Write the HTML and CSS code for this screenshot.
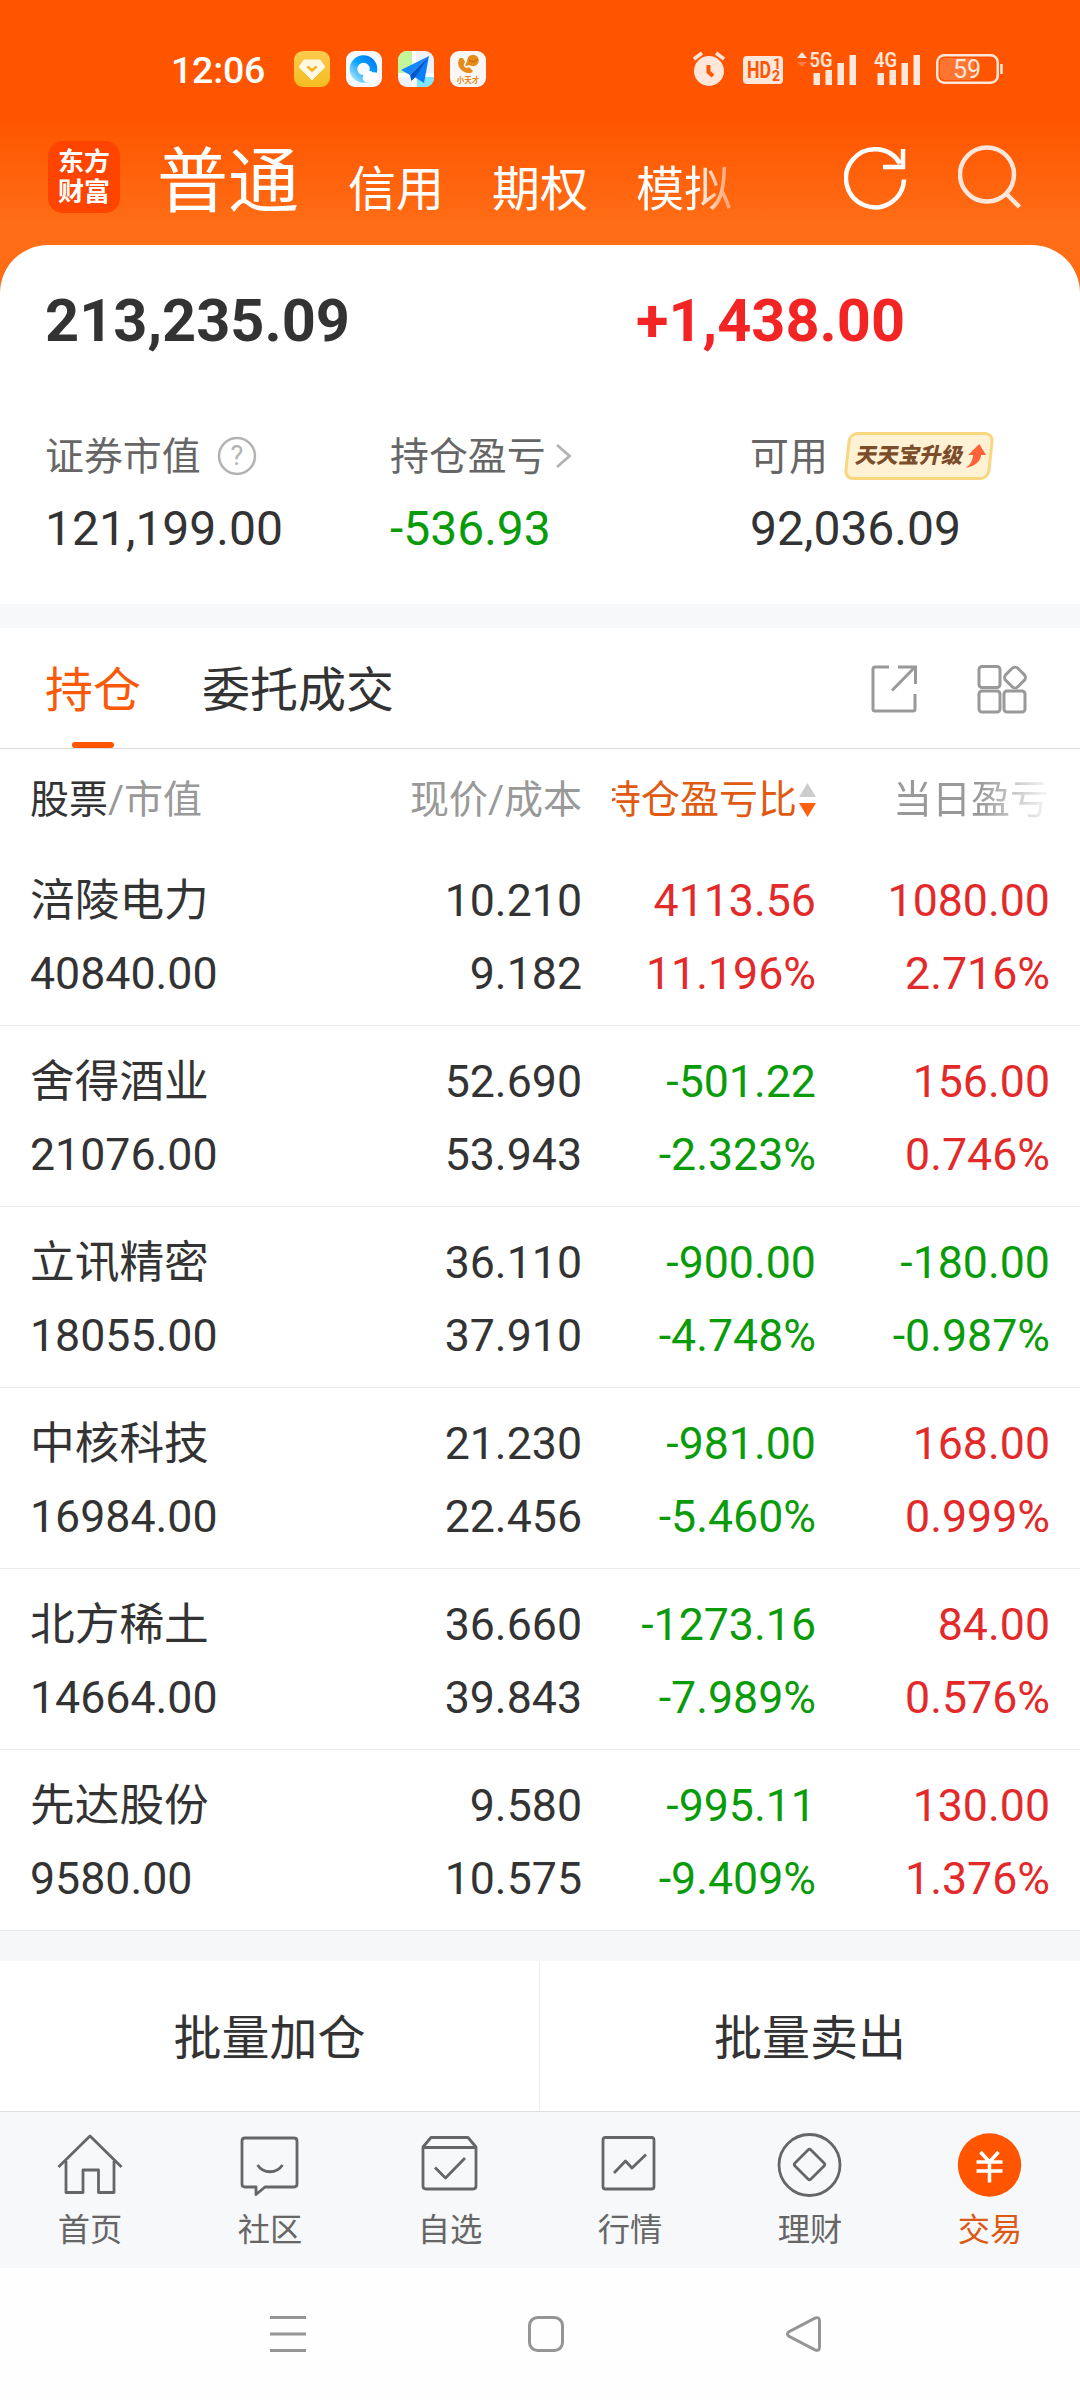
FILE: index.html
```html
<!DOCTYPE html>
<html lang="zh-CN">

<head>
    <meta charset="UTF-8">
    <meta name="viewport" content="width=device-width, initial-scale=1.0">
    <title>交易</title>
    <link rel="stylesheet" href="styles.css">
</head>

<body>

    <header class="header">
        <div class="status">
            <span class="time">12:06</span>
            <div class="apps">
                <svg width="36" height="36" viewBox="0 0 36 36">
                    <defs>
                        <linearGradient id="gold" x1="0" y1="0" x2="0" y2="1">
                            <stop offset="0" stop-color="#fbcb4e" />
                            <stop offset="1" stop-color="#f4bd20" />
                        </linearGradient>
                    </defs>
                    <rect width="36" height="36" rx="9" fill="url(#gold)" />
                    <path d="M10 9h16l5 7-13 13L5 16z" fill="#fff8e2" stroke="#fff8e2" stroke-linejoin="round" />
                    <path d="M13.500 15.500l4.500 4 4.500-4" fill="none" stroke="#f2b51d" stroke-width="2.800" />
                </svg>
                <svg width="36" height="36" viewBox="0 0 36 36">
                    <defs>
                        <linearGradient id="ring" x1="1" y1="0" x2="0" y2="1">
                            <stop offset="0" stop-color="#007cf6" />
                            <stop offset=".5" stop-color="#0aa5fb" />
                            <stop offset="1" stop-color="#9fe0ff" />
                        </linearGradient>
                    </defs>
                    <rect width="36" height="36" rx="9" fill="#f5f8fc" />
                    <circle cx="17.500" cy="18" r="10" fill="none" stroke="url(#ring)" stroke-width="7.500" />
                    <path d="M19 31a4.500 4.500 0 0 1 0-8 5 5 0 0 1 8-1.500 5 5 0 0 1 3 9.500z" fill="#fff" />
                </svg>
                <svg width="36" height="36" viewBox="0 0 36 36">
                    <rect width="36" height="36" rx="9" fill="#eef2f6" />
                    <path d="M9 0h5v22H0V9a9 9 0 0 1 9-9z" fill="#c3f59a" />
                    <path d="M19 26h17v1a9 9 0 0 1-9 9h-8z" fill="#7fe6ff" />
                    <path d="M14 0h4v36h-4zM0 22h36v4H0z" fill="#fff" />
                    <path d="M31 5L3 19l9 5z" fill="#1287ff" />
                    <path d="M31 5L15 25l11 7z" fill="#0a7dfa" />
                    <path d="M31 5L12 24l1.500 6 4-4z" fill="#0355c8" />
                </svg>
                <svg width="36" height="36" viewBox="0 0 36 36">
                    <rect width="36" height="36" rx="9" fill="#f9f7f5" />
                    <path d="M10 7c-5 6 1 16 11 15l2-2-4-4-2 1c-2 0-4-3-3-4l1-2-2-4z" fill="#e88a1a" />
                    <circle cx="23" cy="9.500" r="5.800" fill="#e88a1a" />
                    <path d="M17 10l-2 5 6-1z" fill="#e88a1a" />
                    <path d="M19 9q4 4 9-1" fill="none" stroke="#b96208" />
                    <text class="tiny" x="18" y="31.500" text-anchor="middle">小天才</text>
                </svg>
            </div>
            <div class="signals">
                <svg class="alarm" width="32" height="36" viewBox="0 0 32 36">
                    <circle cx="16" cy="20" r="15" fill="#ffe6da" />
                    <path d="M1 8l8-6M31 8l-8-6" stroke="#ffe6da" stroke-width="3.500" />
                    <path d="M15.500 14v7l4.500 4" fill="none" stroke="#ff5500" stroke-width="4" />
                </svg>
                <svg class="hd" width="40" height="28" viewBox="0 0 40 28">
                    <rect width="40" height="28" rx="4" fill="#ffe6da" />
                    <text class="hd-text" x="4" y="22" textLength="24" lengthAdjust="spacingAndGlyphs">HD</text>
                    <text class="hd-num" x="30" y="13">1</text>
                    <text class="hd-num" x="29" y="25">2</text>
                </svg>
                <svg class="net5" width="60" height="40" viewBox="0 -3 60 40">
                    <path d="M0 6l5-6 5 6z" fill="#ffe6da" />
                    <path d="M0 10h10l-5 5z" fill="#ff7d40" />
                    <text class="net-text" x="12.500" y="15" textLength="23" lengthAdjust="spacingAndGlyphs">5G</text>
                    <path d="M16.500 21h6.500v12h-6.500zM28.500 18H35v15h-6.500zM40.500 11H47v22h-6.500zM52.500 3H59v30h-6.500z" fill="#ffe6da" />
                </svg>
                <svg class="net4" width="46" height="40" viewBox="0 -3 46 40">
                    <text class="net-text" x="0" y="15" textLength="23" lengthAdjust="spacingAndGlyphs">4G</text>
                    <path d="M3.500 21H10v12H3.500zM15.500 18H22v15h-6.500zM27.500 11H34v22h-6.500zM39.500 3H46v30h-6.500z" fill="#ffe6da" />
                </svg>
                <svg class="battery" width="67" height="30" viewBox="0 0 67 30">
                    <rect x="4" y="4" width="35" height="22" rx="5" fill="#ff7430" />
                    <rect x="1.250" y="1.250" width="60.500" height="27.500" rx="7" fill="none" stroke="#ffe6da" stroke-width="2.500" />
                    <path d="M65.500 10v10" stroke="#ffe6da" stroke-width="2.500" />
                    <text class="battery-text" x="31" y="24" text-anchor="middle">59</text>
                </svg>
            </div>
        </div>
        <nav class="accounts">
            <div class="logo">东方<br>财富</div>
            <div class="types">
                <span class="type current">普通</span>
                <span class="type">信用</span>
                <span class="type">期权</span>
                <span class="type fade">模拟</span>
            </div>
            <svg class="refresh" width="64" height="64" viewBox="0 0 64 64" fill="none" stroke="#fff" stroke-width="4.500">
                <path d="M60 33.500A29 29 0 1 1 56 17.500M59 3v18H39" />
            </svg>
            <svg class="search" width="64" height="64" viewBox="0 0 64 64" fill="none" stroke="#ffe6da" stroke-width="4.500">
                <circle cx="29" cy="29.500" r="27" />
                <path d="M47.500 48l14 14" />
            </svg>
        </nav>
    </header>

    <section class="summary">
        <div class="totals">
            <span class="total">213,235.09</span>
            <span class="total gain">+1,438.00</span>
        </div>
        <div class="stats">
            <div class="stat">
                <div class="stat-label"><span>证券市值</span>
                    <svg class="help" width="40" height="40" viewBox="0 0 40 40">
                        <circle cx="20" cy="20" r="18" fill="none" stroke="#b3b3b3" stroke-width="2.500" />
                        <text x="20" y="29" text-anchor="middle">?</text>
                    </svg>
                </div>
                <div class="stat-value">121,199.00</div>
            </div>
            <div class="stat">
                <div class="stat-label"><span>持仓盈亏</span>
                    <svg class="more" width="18" height="28" viewBox="0 0 18 28" fill="none" stroke="#b3b3b3" stroke-width="2.800">
                        <path d="M2 3l12.500 11L2 25" />
                    </svg>
                </div>
                <div class="stat-value green">-536.93</div>
            </div>
            <div class="stat">
                <div class="stat-label"><span>可用</span>
                    <div class="badge">
                        <b>天天宝升级</b>
                        <svg width="20" height="26" viewBox="0 0 20 26">
                            <path d="M12 1l8 11h-5c0 6-4 11-14 13 5-4 6-8 6-13H2z" fill="#ff6238" />
                        </svg>
                    </div>
                </div>
                <div class="stat-value">92,036.09</div>
            </div>
        </div>
    </section>

    <section class="positions">
        <div class="tabs">
            <span class="tab active">持仓</span>
            <span class="tab">委托成交</span>
            <svg class="share" width="46" height="48" viewBox="0 0 46 48" fill="none" stroke="#999" stroke-width="3">
                <path d="M18 2H4Q2 2 2 4v40q0 2 2 2h38q2 0 2-2V29M27 2h17.500v17M44 2L21 25.500" />
            </svg>
            <svg class="grid" width="50" height="50" viewBox="0 0 50 50" fill="none" stroke="#999" stroke-width="3">
                <rect x="2" y="2.500" width="21" height="21" rx="3" />
                <rect x="2" y="27" width="21" height="21" rx="3" />
                <rect x="27" y="27" width="21" height="21" rx="3" />
                <rect x="29.500" y="5" width="17" height="17" rx="4" transform="rotate(45 38 13.500)" />
            </svg>
        </div>
        <div class="row head">
            <div class="cell name"><span class="dark">股票</span>/市值</div>
            <div class="cell">现价/成本</div>
            <div class="cell sort">
                <span class="sort-text"><span>持仓盈亏比</span></span>
                <svg width="17" height="36" viewBox="0 0 17 36">
                    <path d="M0 15L8.500 1 17 15z" fill="#ccc" />
                    <path d="M0 21h17L8.500 35z" fill="#ff5f10" />
                </svg>
            </div>
            <div class="cell day">当日盈亏</div>
        </div>
        <div class="row">
            <div class="cell name">涪陵电力<br>40840.00</div>
            <div class="cell">10.210<br>9.182</div>
            <div class="cell red">4113.56<br>11.196%</div>
            <div class="cell red">1080.00<br>2.716%</div>
        </div>
        <div class="row">
            <div class="cell name">舍得酒业<br>21076.00</div>
            <div class="cell">52.690<br>53.943</div>
            <div class="cell green">-501.22<br>-2.323%</div>
            <div class="cell red">156.00<br>0.746%</div>
        </div>
        <div class="row">
            <div class="cell name">立讯精密<br>18055.00</div>
            <div class="cell">36.110<br>37.910</div>
            <div class="cell green">-900.00<br>-4.748%</div>
            <div class="cell green">-180.00<br>-0.987%</div>
        </div>
        <div class="row">
            <div class="cell name">中核科技<br>16984.00</div>
            <div class="cell">21.230<br>22.456</div>
            <div class="cell green">-981.00<br>-5.460%</div>
            <div class="cell red">168.00<br>0.999%</div>
        </div>
        <div class="row">
            <div class="cell name">北方稀土<br>14664.00</div>
            <div class="cell">36.660<br>39.843</div>
            <div class="cell green">-1273.16<br>-7.989%</div>
            <div class="cell red">84.00<br>0.576%</div>
        </div>
        <div class="row">
            <div class="cell name">先达股份<br>9580.00</div>
            <div class="cell">9.580<br>10.575</div>
            <div class="cell green">-995.11<br>-9.409%</div>
            <div class="cell red">130.00<br>1.376%</div>
        </div>
    </section>

    <div class="batch">
        <div class="batch-btn">批量加仓</div>
        <div class="batch-btn">批量卖出</div>
    </div>

    <nav class="tabbar">
        <div class="item">
            <svg width="66" height="66" viewBox="0 0 66 66">
                <path d="M1.500 35L33 4l31.500 31M9 29v31.500h17V38h15.500v22.500H57V29" />
            </svg>
            首页
        </div>
        <div class="item">
            <svg width="66" height="66" viewBox="0 0 66 66">
                <path d="M8 6h49q3 0 3 3v43q0 3-3 3H28l-9 7.500V55H8q-3 0-3-3V9q0-3 3-3zM20.500 33c6 9 19 9 25 0" />
            </svg>
            社区
        </div>
        <div class="item">
            <svg width="66" height="66" viewBox="0 0 66 66">
                <path d="M6 15v39q0 3 3 3h47q3 0 3-3V15l-8-9.500H14zM6 15.500h53M18 35.500L28.500 46 48 26" />
            </svg>
            自选
        </div>
        <div class="item">
            <svg width="66" height="66" viewBox="0 0 66 66">
                <rect x="6" y="5.500" width="51" height="51.500" rx="2.500" />
                <path d="M17 41l11.500-12 6.500 7 14-13.500" />
            </svg>
            行情
        </div>
        <div class="item">
            <svg width="66" height="66" viewBox="0 0 66 66">
                <circle cx="32.500" cy="33" r="30.500" />
                <path d="M31 18q1.500-1.500 3 0l13 13q1.500 1.500 0 3l-13 13q-1.500 1.500-3 0l-13-13q-1.500-1.500 0-3z" />
            </svg>
            理财
        </div>
        <div class="item on">
            <svg width="66" height="66" viewBox="0 0 66 66">
                <circle class="coin" cx="32.500" cy="33" r="31.700" />
                <path class="yen" d="M23.500 20l9 10 9-10M19.500 30h26M19.500 39h26M32.500 30v20.500" />
            </svg>
            交易
        </div>
    </nav>

    <div class="sysnav">
        <svg width="36" height="36" viewBox="0 0 36 36">
            <path d="M0 1.500h36M0 18h36M0 34.500h36" />
        </svg>
        <svg width="36" height="36" viewBox="0 0 36 36">
            <rect x="1.500" y="1.500" width="33" height="33" rx="8" />
        </svg>
        <svg width="36" height="36" viewBox="0 0 36 36">
            <path d="M29 2.200q4.500-2 4.500 3v25.600q0 5-4.500 3L2.500 20q-2-2 0-4z" />
        </svg>
    </div>

</body>

</html>
```
FILE: styles.css
```css
* {
    box-sizing: border-box;
}

body {
    margin: 0;
    width: 1080px;
    height: 2400px;
    overflow: hidden;
    background: #fefefe;
    color: #333;
    font-family: Roboto, "Noto Sans CJK SC", sans-serif;
    font-weight: 400;
}

svg {
    display: block;
    flex: none;
}

/* header */
.header {
    height: 310px;
    background: linear-gradient(#ff5500 0, #ff5500 120px, #ff6e17 230px, #ff6a12 300px);
}

.status {
    display: flex;
    align-items: center;
    height: 138px;
    padding-left: 171px;
}

.time {
    width: 123px;
    padding-top: 2px;
    color: #fff;
    font-size: 37.5px;
    font-weight: 500;
    letter-spacing: -0.2px;
}

.apps {
    display: flex;
    gap: 16px;
}

.tiny {
    font-size: 7.5px;
    font-weight: 700;
    fill: #e88a1a;
}

.signals {
    display: flex;
    align-items: center;
    margin-left: 207px;
}

.hd {
    margin-top: 2px;
    margin-left: 18px;
}

.net5 {
    margin-left: 14px;
}

.net4 {
    margin-left: 17px;
}

.battery {
    margin-left: 16px;
}

.hd-text {
    font-size: 23px;
    font-weight: 700;
    fill: #ff5500;
}

.hd-num {
    font-size: 14px;
    font-weight: 700;
    fill: #ff5500;
}

.net-text {
    font-size: 20px;
    font-weight: 600;
    fill: #ffe6da;
}

.battery-text {
    font-size: 25px;
    fill: #ffe6da;
}

.accounts {
    display: flex;
    height: 107px;
    padding-left: 48px;
    color: #fff;
}

.logo {
    width: 72px;
    height: 72px;
    margin-top: 3px;
    padding-top: 6px;
    border-radius: 15px;
    background: #ff4400;
    font-size: 26px;
    font-weight: 700;
    line-height: 30px;
    text-align: center;
}

.types {
    display: flex;
    align-items: baseline;
    gap: 48px;
    width: 724px;
    margin-top: 4px;
    padding-left: 37px;
    line-height: 80px;
}

.type {
    font-size: 48px;
    font-weight: 400;
}

.current {
    margin-right: 1px;
    font-size: 71px;
}

.fade {
    background: linear-gradient(90deg, #fff 60%, #ffa878 95%);
    background-clip: text;
    -webkit-background-clip: text;
    color: transparent;
}

.refresh {
    margin-top: 8px;
}

.search {
    margin-top: 7px;
    margin-left: 50px;
}

/* assets */
.summary {
    height: 359px;
    margin-top: -65px;
    padding: 40px 45px 0;
    border-radius: 48px 48px 0 0;
    background: #fff;
}

.totals {
    display: flex;
    height: 72px;
    line-height: 72px;
}

.total {
    flex: none;
    width: 591px;
    font-size: 59.5px;
    font-weight: 700;
}

.gain {
    width: auto;
    color: #f32424;
}

.stats {
    display: grid;
    grid-template-columns: 345px 360px 1fr;
    margin-top: 71px;
}

.stat-label {
    display: flex;
    align-items: center;
    height: 56px;
    color: #666;
    font-size: 38.9px;
}

.stat-label > span {
    height: 56px;
    line-height: 57px;
}

.help {
    margin-left: 16px;
}

.help text {
    font-size: 27px;
    fill: #b3b3b3;
}

.more {
    margin-left: 9px;
}

.badge {
    display: flex;
    flex: none;
    align-items: center;
    gap: 2px;
    width: 146px;
    height: 48px;
    margin-left: 18px;
    padding-left: 7px;
    border: 3px solid #f8d77f;
    border-radius: 9px;
    background: #fff1d4;
    transform: skewX(-6deg);
}

.badge b {
    color: #7c4d2a;
    font-size: 21.5px;
    font-weight: 900;
    line-height: 36px;
    white-space: nowrap;
    transform: skewX(-6deg);
}

.stat-value {
    margin-top: 17px;
    font-size: 48px;
    line-height: 56px;
}

.green {
    color: #0a9b0a;
}

.red {
    color: #e32a2a;
}

/* positions */
.positions {
    border-top: 24px solid #f7f8fa;
    background: #fff;
}

.tabs {
    display: flex;
    align-items: center;
    height: 121px;
    padding-left: 45px;
    border-bottom: 1px solid #ddd;
}

.tab {
    height: 120px;
    font-size: 48px;
    line-height: 125px;
}

.tab + .tab {
    margin-left: 61px;
}

.active {
    color: #f95a0a;
}

.active::after {
    content: "";
    display: block;
    width: 42px;
    height: 6px;
    margin: -11px auto 0;
    border-radius: 3px;
    background: #ff5500;
}

.share {
    margin-top: 2px;
    margin-left: 477px;
}

.grid {
    margin-top: 2px;
    margin-left: 60px;
}

.row {
    display: grid;
    grid-template-columns: 300px 252px 234px 234px;
    height: 181px;
    padding: 20px 30px 0;
    border-bottom: 1px solid #ebebeb;
    font-size: 44.7px;
    line-height: 73px;
}

.cell {
    text-align: right;
    white-space: nowrap;
}

.name {
    text-align: left;
}

.head {
    height: 96px;
    padding-top: 0;
    border: 0;
    color: #999;
    font-size: 39px;
    line-height: 102px;
}

.dark {
    color: #333;
}

.sort {
    display: flex;
    align-items: center;
    justify-content: flex-end;
    gap: 2px;
    height: 102px;
    color: #e05a12;
}

.sort-text {
    display: flex;
    justify-content: flex-end;
    width: 185px;
    overflow: hidden;
}

.day {
    padding-right: 1px;
    background: linear-gradient(90deg, #999 70%, #f6f6f6 99%);
    background-clip: text;
    -webkit-background-clip: text;
    color: transparent;
}

/* batch buttons */
.batch {
    display: flex;
    height: 181px;
    border-top: 30px solid #f6f7f9;
    border-bottom: 1px solid #ddd;
    background: #fff;
}

.batch-btn {
    flex: none;
    width: 540px;
    font-size: 48px;
    line-height: 155px;
    text-align: center;
}

.batch-btn:first-child {
    border-right: 1px solid #eee;
}

/* bottom bar */
.tabbar {
    display: flex;
    height: 156px;
    padding-top: 20px;
    background: #f7f8fa;
}

.item {
    display: flex;
    flex: 1;
    flex-direction: column;
    align-items: center;
    color: #666;
    font-size: 32.3px;
    line-height: 64px;
}

.item svg {
    fill: none;
    stroke: #666;
    stroke-width: 2.8;
    stroke-linejoin: round;
}

.on {
    color: #dd5a14;
}

.item .coin {
    fill: #ff5500;
    stroke: none;
}

.item .yen {
    stroke: #fff;
    stroke-width: 3.5;
}

.sysnav {
    display: flex;
    gap: 222px;
    height: 132px;
    padding: 48px 0 0 270px;
}

.sysnav svg {
    fill: none;
    stroke: #959595;
    stroke-width: 3;
}
```
